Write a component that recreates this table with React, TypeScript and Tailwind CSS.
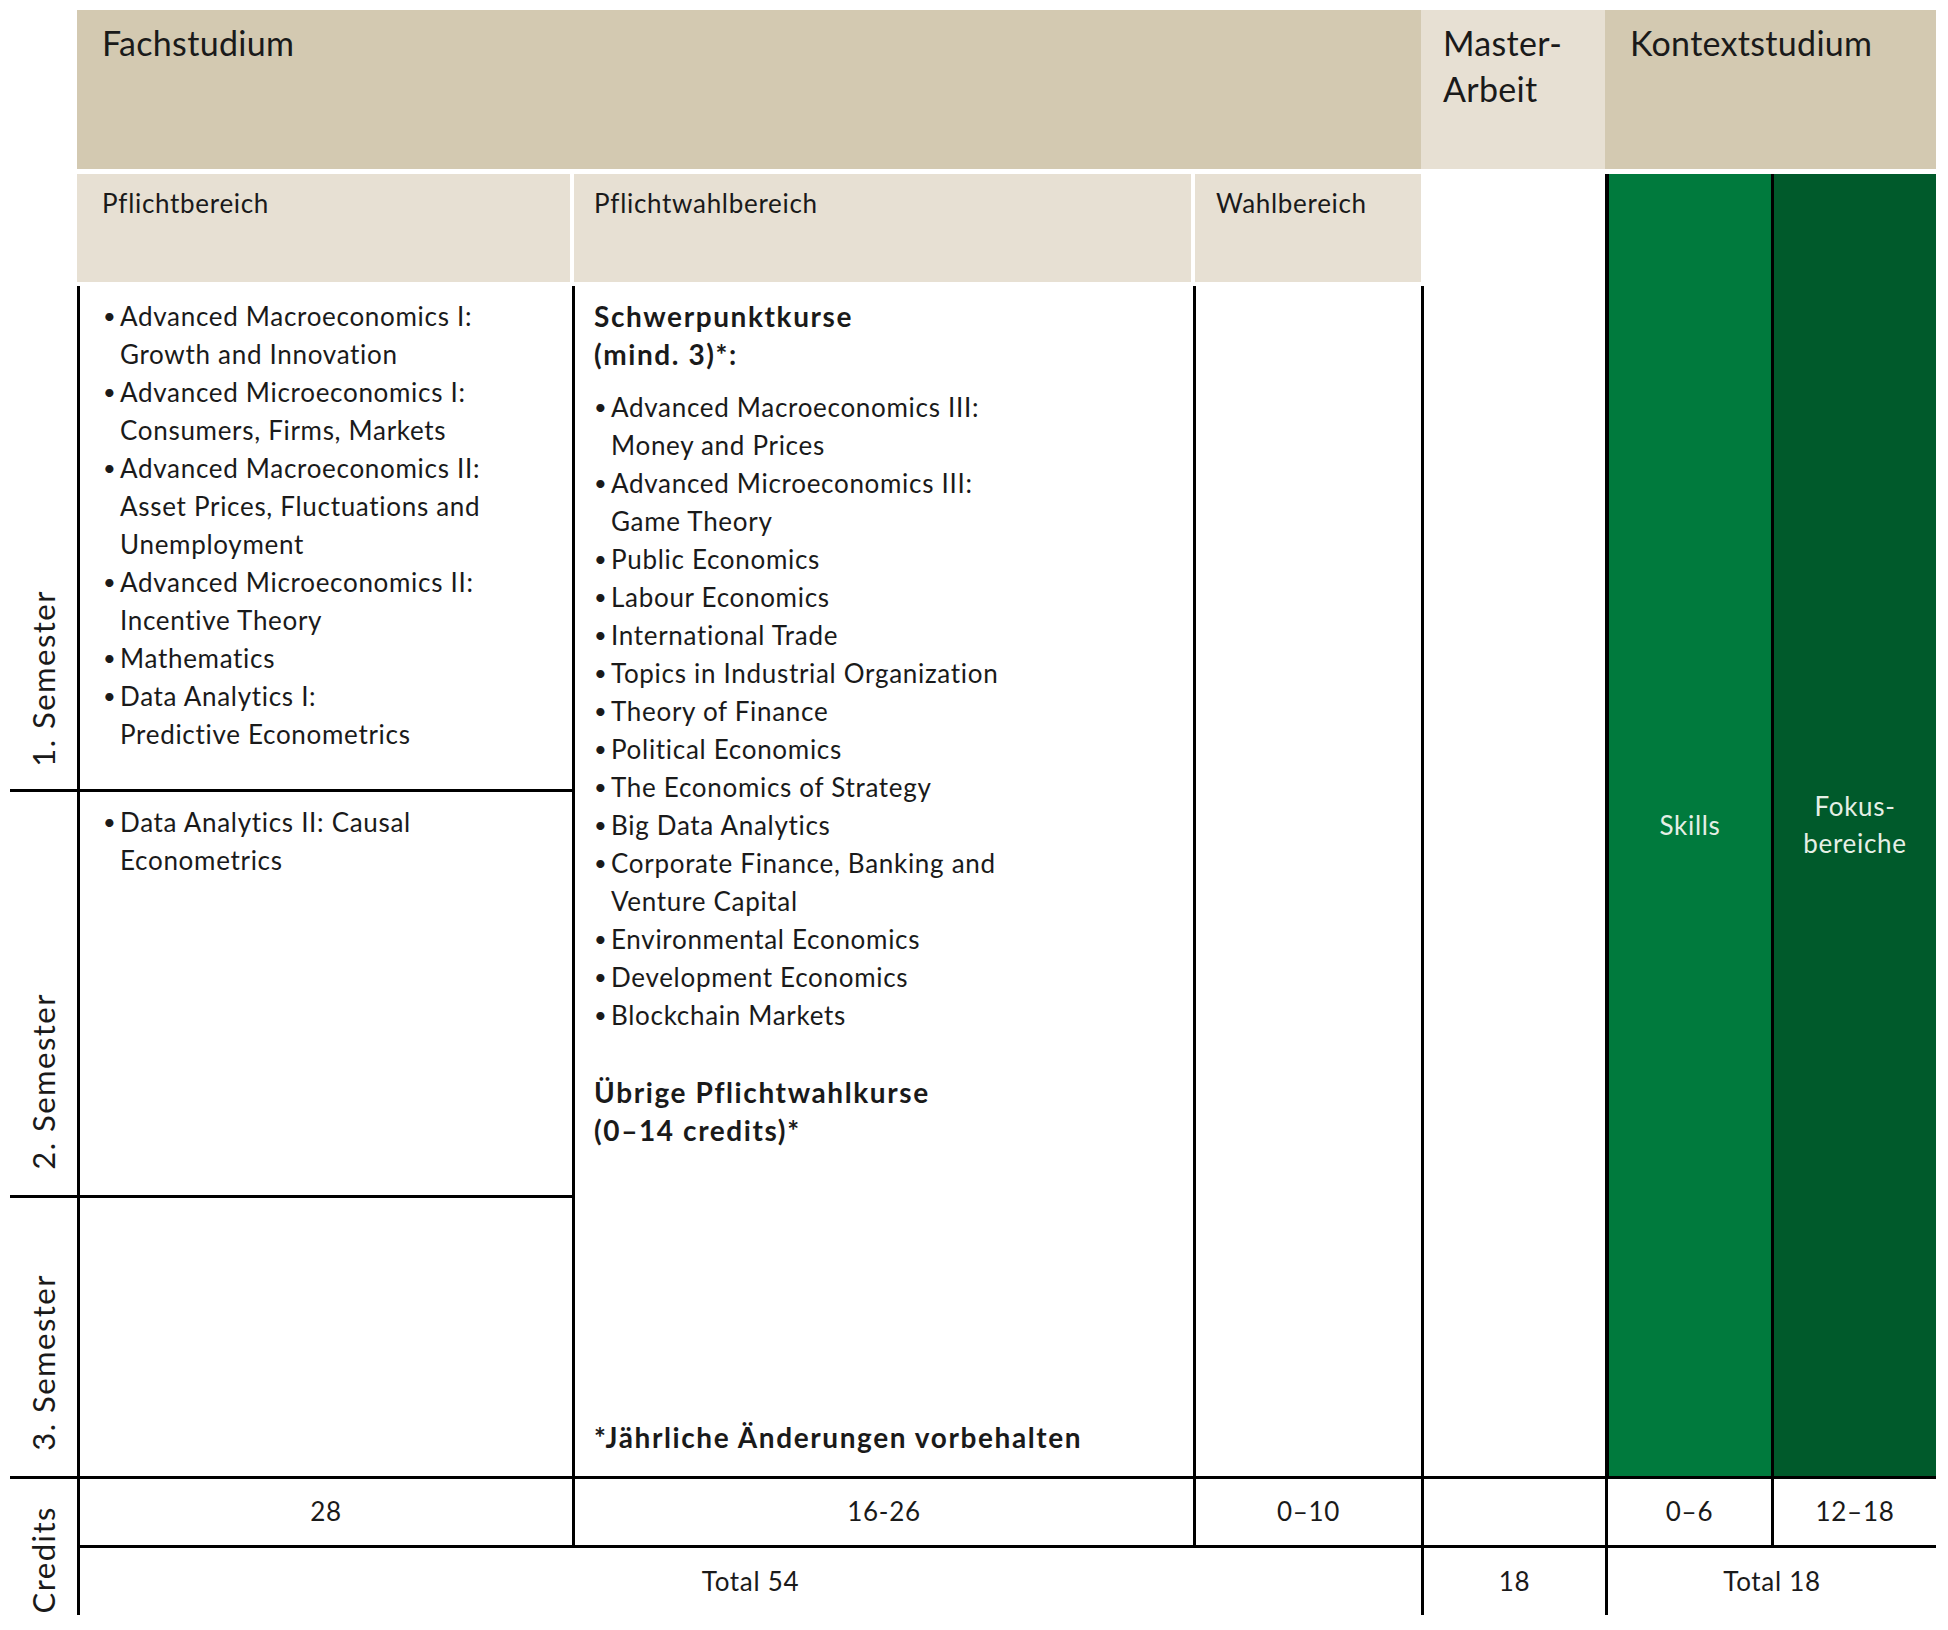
const pflicht1 = [
  ["Advanced Macroeconomics I:", "Growth and Innovation"],
  ["Advanced Microeconomics I:", "Consumers, Firms, Markets"],
  ["Advanced Macroeconomics II:", "Asset Prices, Fluctuations and", "Unemployment"],
  ["Advanced Microeconomics II:", "Incentive Theory"],
  ["Mathematics"],
  ["Data Analytics I:", "Predictive Econometrics"],
];

const pflicht2 = [["Data Analytics II: Causal", "Econometrics"]];

const schwerpunkt = [
  ["Advanced Macroeconomics III:", "Money and Prices"],
  ["Advanced Microeconomics III:", "Game Theory"],
  ["Public Economics"],
  ["Labour Economics"],
  ["International Trade"],
  ["Topics in Industrial Organization"],
  ["Theory of Finance"],
  ["Political Economics"],
  ["The Economics of Strategy"],
  ["Big Data Analytics"],
  ["Corporate Finance, Banking and", "Venture Capital"],
  ["Environmental Economics"],
  ["Development Economics"],
  ["Blockchain Markets"],
];

const BulletList = ({ items }: { items: string[][] }) => (
  <ul className="flex flex-col">
    {items.map((lines) => (
      <li key={lines[0]} className="flex">
        <span className="w-[17px] shrink-0 text-[22px] tracking-normal">•</span>
        <span className="flex flex-col">
          {lines.map((l) => (
            <span key={l}>{l}</span>
          ))}
        </span>
      </li>
    ))}
  </ul>
);

const SemesterLabel = ({ label, className }: { label: string; className: string }) => (
  <div className={`col-start-1 flex flex-col items-center justify-end ${className}`}>
    <span className="[writing-mode:vertical-rl] rotate-180 text-[31px] leading-none tracking-[1.5px] text-[#1a1a1a]">
      {label}
    </span>
  </div>
);

export default function App() {
  return (
    <div className="min-h-screen bg-white pl-[10px] pt-[10px] font-['Lato',sans-serif] text-[#1a1a1a]">
      <div className="grid grid-cols-[67px_495px_621px_228px_184px_166px_165px] grid-rows-[164px_112px_503px_406px_281px_69px_70px] text-[26px] leading-[38px] tracking-[0.7px]">
        {/* header row 1 */}
        <div className="col-start-2 col-span-3 row-start-1 pb-[5px]">
          <div className="h-full bg-[#d3c9b1] pl-[25px] pt-[10px] text-[34px] leading-[46px] tracking-[0.3px]">
            Fachstudium
          </div>
        </div>
        <div className="col-start-5 row-start-1 pb-[5px]">
          <div className="h-full bg-[#e7e0d3] pl-[22px] pt-[10px] text-[34px] leading-[46px] tracking-[0.3px]">
            Master-
            <br />
            Arbeit
          </div>
        </div>
        <div className="col-start-6 col-span-2 row-start-1 pb-[5px]">
          <div className="h-full bg-[#d3c9b1] pl-[25px] pt-[10px] text-[34px] leading-[46px] tracking-[0.3px]">
            Kontextstudium
          </div>
        </div>

        {/* header row 2 */}
        <div className="col-start-2 row-start-2 pb-[4px] pr-[2px]">
          <div className="h-full bg-[#e7e0d3] pl-[25px] pt-[10px]">Pflichtbereich</div>
        </div>
        <div className="col-start-3 row-start-2 pb-[4px] px-[2px]">
          <div className="h-full bg-[#e7e0d3] pl-[20px] pt-[10px]">Pflichtwahlbereich</div>
        </div>
        <div className="col-start-4 row-start-2 pb-[4px] pl-[2px]">
          <div className="h-full bg-[#e7e0d3] pl-[21px] pt-[10px]">Wahlbereich</div>
        </div>

        {/* semester labels */}
        <SemesterLabel label="1. Semester" className="row-start-3 pb-[22px]" />
        <SemesterLabel label="2. Semester" className="row-start-4 border-t-[3px] border-black pb-[25px]" />
        <SemesterLabel label="3. Semester" className="row-start-5 border-t-[3px] border-black pb-[25px]" />
        <div className="col-start-1 row-start-6 row-span-2 flex flex-col items-center justify-end border-t-[3px] border-black pb-[2px]">
          <span className="[writing-mode:vertical-rl] rotate-180 text-[31px] leading-none tracking-[1.5px]">Credits</span>
        </div>

        {/* Pflichtbereich */}
        <div className="col-start-2 row-start-3 border-l-[3px] border-black pl-[23px] pt-[11px]">
          <BulletList items={pflicht1} />
        </div>
        <div className="col-start-2 row-start-4 border-l-[3px] border-t-[3px] border-black pl-[23px] pt-[11px]">
          <BulletList items={pflicht2} />
        </div>
        <div className="col-start-2 row-start-5 border-l-[3px] border-t-[3px] border-black" />

        {/* Pflichtwahlbereich */}
        <div className="col-start-3 row-start-3 row-span-3 flex flex-col justify-between border-l-[3px] border-black pl-[19px] pt-[11px] pb-[20px]">
          <div className="flex flex-col">
            <div className="text-[28px] font-bold tracking-[1.6px]">
              Schwerpunktkurse
              <br />
              (mind. 3)*:
            </div>
            <div className="mt-[15px]">
              <BulletList items={schwerpunkt} />
            </div>
            <div className="mt-[39px] text-[28px] font-bold tracking-[1.6px]">
              Übrige Pflichtwahlkurse
              <br />
              (0–14 credits)*
            </div>
          </div>
          <div className="text-[28px] font-bold tracking-[1.6px]">*Jährliche Änderungen vorbehalten</div>
        </div>

        {/* Wahlbereich and Master-Arbeit */}
        <div className="col-start-4 row-start-3 row-span-3 border-l-[3px] border-black" />
        <div className="col-start-5 row-start-3 row-span-3 border-l-[3px] border-black" />

        {/* Kontextstudium */}
        <div className="col-start-6 row-start-2 row-span-4 flex items-center justify-center border-l-[4px] border-black bg-[#007a3d] text-[#e6efe6]">
          Skills
        </div>
        <div className="col-start-7 row-start-2 row-span-4 flex items-center justify-center border-l-[3px] border-black bg-[#005a2b] text-center text-[#e6efe6] leading-[37px]">
          Fokus-
          <br />
          bereiche
        </div>

        {/* credits row 1 */}
        <div className="col-start-2 row-start-6 flex items-center justify-center border-l-[3px] border-t-[3px] border-black pb-[2px]">28</div>
        <div className="col-start-3 row-start-6 flex items-center justify-center border-l-[3px] border-t-[3px] border-black pb-[2px]">16-26</div>
        <div className="col-start-4 row-start-6 flex items-center justify-center border-l-[3px] border-t-[3px] border-black pb-[2px]">0–10</div>
        <div className="col-start-5 row-start-6 border-l-[3px] border-t-[3px] border-black" />
        <div className="col-start-6 row-start-6 flex items-center justify-center border-l-[3px] border-t-[3px] border-black pb-[2px]">0–6</div>
        <div className="col-start-7 row-start-6 flex items-center justify-center border-l-[3px] border-t-[3px] border-black pb-[2px]">12–18</div>

        {/* credits row 2 */}
        <div className="col-start-2 col-span-3 row-start-7 flex items-center justify-center border-l-[3px] border-t-[3px] border-black pb-[2px]">Total 54</div>
        <div className="col-start-5 row-start-7 flex items-center justify-center border-l-[3px] border-t-[3px] border-black pb-[2px]">18</div>
        <div className="col-start-6 col-span-2 row-start-7 flex items-center justify-center border-l-[3px] border-t-[3px] border-black pb-[2px]">Total 18</div>
      </div>
    </div>
  );
}
